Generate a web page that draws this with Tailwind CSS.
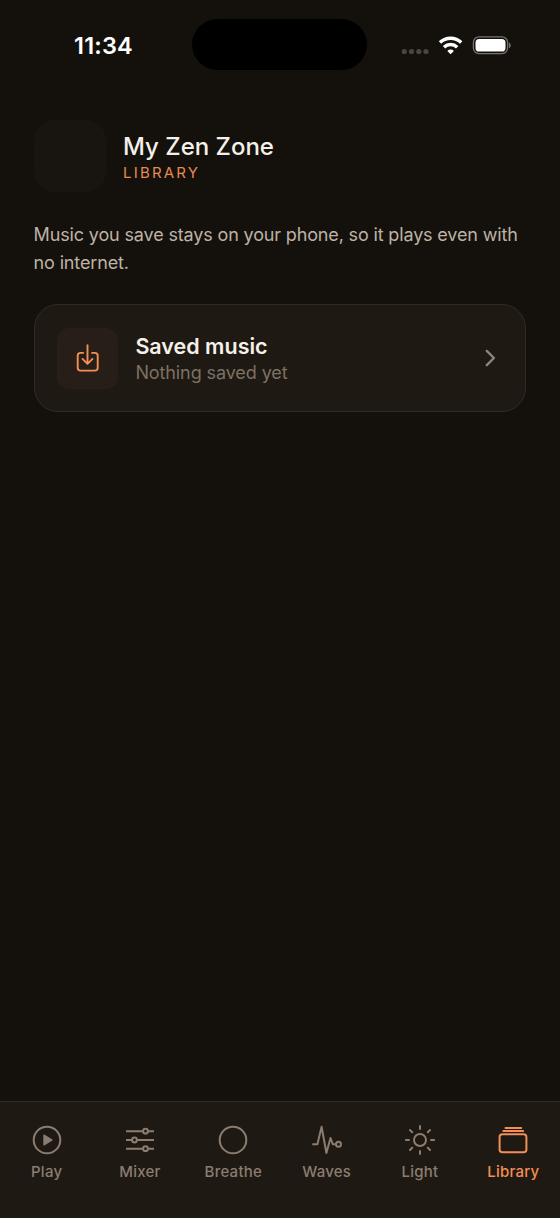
<!DOCTYPE html>
<html lang="en">
<head>
<meta charset="utf-8">
<title>My Zen Zone</title>
<script src="https://cdn.jsdelivr.net/npm/@tailwindcss/browser@4"></script>
</head>
<body class="bg-[#14110c] font-['Inter',sans-serif] antialiased">
<div class="flex h-[1218px] w-[560px] flex-col overflow-hidden">
  <header class="flex h-[90px] items-center pr-[49px] pl-[74px]">
    <div class="w-[118.4px] pt-[2px] text-[23.5px] leading-7 font-semibold tracking-[0.2px] whitespace-nowrap text-white">11:34</div>
    <div class="mb-[1px] h-[51px] w-[175px] rounded-full bg-black"></div>
    <div class="ml-auto flex items-center">
      <svg class="h-[24px] w-[110px]" viewBox="401 33 110 24" fill="none">
        <g fill="#484542"><circle cx="404.3" cy="51.5" r="2.6"/><circle cx="411.5" cy="51.5" r="2.6"/><circle cx="418.8" cy="51.5" r="2.6"/><circle cx="426" cy="51.5" r="2.6"/></g>
        <g stroke="#fff" stroke-width="3.5"><path d="M440 42.6a15.3 15.3 0 0 1 21.2 0"/><path d="M444 47.2a9.6 9.6 0 0 1 13.2 0"/></g>
        <path d="M450.6 54.2l-3.3-3.3a4.7 4.7 0 0 1 6.6 0z" fill="#fff"/>
        <rect x="473.4" y="36.9" width="34.2" height="16.8" rx="5.6" stroke="#75726f" stroke-width="1.3"/>
        <rect x="475.5" y="39" width="30" height="12.6" rx="3.7" fill="#fff"/>
        <path d="M509 42.4c2.2 1 2.2 4.8 0 5.8z" fill="#75726f"/>
      </svg>
    </div>
  </header>
  <main class="flex-1 px-[33.6px] pt-[30px]">
    <div class="flex items-center gap-[17.4px]">
      <div class="size-[72px] rounded-[20px] bg-[#181510]"></div>
      <div class="pt-[4px]">
        <h1 class="text-[24px] leading-[29px] font-medium whitespace-nowrap text-[#f5f0e8]">My Zen Zone</h1>
        <p class="text-[15px] leading-[24px] tracking-[2.2px] text-[#e58a52]">LIBRARY</p>
      </div>
    </div>
    <p class="mt-[29px] text-[18px] leading-7 tracking-[-0.15px] whitespace-nowrap text-[#beb2a5]">Music you save stays on your phone, so it plays even with<br>no internet.</p>
    <section class="mt-[27px] flex h-[108px] items-center rounded-[24px] border border-[#302c23] bg-[#1e1913] pr-[29.6px] pl-[22.4px]">
      <div class="flex size-[61px] items-center justify-center rounded-[12px] bg-[#261e17]">
        <svg class="size-[30px]" viewBox="72.3 343.4 30 30" fill="none" stroke="#f38e55" stroke-width="1.9" stroke-linecap="round" stroke-linejoin="round"><path d="M83.5 353.3H80.8Q78 353.3 78 356.1V368.2Q78 371 80.8 371H95.2Q98 371 98 368.2V356.1Q98 353.3 95.2 353.3H92.3M87.8 345.7V364.2M82.8 359.3L87.8 364.3L92.8 359.3"/></svg>
      </div>
      <div class="ml-[17.4px] flex-1 pt-[1px] whitespace-nowrap">
        <h2 class="text-[21.5px] leading-[27px] font-semibold text-[#f5f0e8]">Saved music</h2>
        <p class="text-[18px] leading-[25px] tracking-[-0.1px] text-[#7d7164]">Nothing saved yet</p>
      </div>
      <svg class="h-[18px] w-[11px]" viewBox="0 0 11 18" fill="none" stroke="#8f8478" stroke-width="2.4" stroke-linecap="round" stroke-linejoin="round"><path d="M1.8 1.9L8.9 9L1.8 16.1"/></svg>
    </section>
  </main>
  <nav class="grid h-[117px] grid-cols-6 border-t border-[#302b24] bg-[#1e1913] text-[15px] leading-5 font-medium tracking-[0.25px] whitespace-nowrap text-[#8b7d70]">
    <div class="flex flex-col items-center pt-[22px]">
      <svg class="size-8" viewBox="0 0 32 32" fill="none" stroke="currentColor" stroke-width="2"><circle cx="16" cy="16" r="13.3"/><path d="M13 11.2L21 16L13 20.8Z" fill="currentColor" stroke-width="1.4" stroke-linejoin="round"/></svg>
      <span class="mt-[6px]">Play</span>
    </div>
    <div class="flex flex-col items-center pt-[22px]">
      <svg class="size-8" viewBox="0 0 32 32" fill="none" stroke="currentColor" stroke-width="2"><path d="M2 7.2H19M24 7.2H30M2 16H8M13 16H30M2 24.7H19M24 24.7H30"/><circle cx="21.5" cy="7.2" r="2.4"/><circle cx="10.5" cy="16" r="2.4"/><circle cx="21.5" cy="24.7" r="2.4"/></svg>
      <span class="mt-[6px]">Mixer</span>
    </div>
    <div class="flex flex-col items-center pt-[22px]">
      <svg class="size-8" viewBox="0 0 32 32" fill="none" stroke="currentColor" stroke-width="2"><circle cx="16" cy="16" r="13.3"/></svg>
      <span class="mt-[6px]">Breathe</span>
    </div>
    <div class="flex flex-col items-center pt-[22px]">
      <svg class="size-8" viewBox="0 0 32 32" fill="none" stroke="currentColor" stroke-width="2" stroke-linejoin="round"><path d="M1.3 20.2H6.4L10.6 2.8L15.4 29L19.5 14L21.8 20.2H24.6"/><circle cx="27.5" cy="20.2" r="2.5"/></svg>
      <span class="mt-[6px]">Waves</span>
    </div>
    <div class="flex flex-col items-center pt-[22px]">
      <svg class="size-8" viewBox="0 0 32 32" fill="none" stroke="currentColor" stroke-width="2" stroke-linecap="round"><circle cx="16" cy="16" r="6"/><path d="M16 1.9V5M16 27V30.1M1.9 16H5M27 16H30.1M6 6L8.2 8.2M23.8 23.8L26 26M6 26L8.2 23.8M23.8 8.2L26 6"/></svg>
      <span class="mt-[6px]">Light</span>
    </div>
    <div class="flex flex-col items-center pt-[22px] text-[#f38e55]">
      <svg class="size-8" viewBox="0 0 32 32" fill="none" stroke="currentColor" stroke-width="2" stroke-linecap="round"><rect x="2.6" y="10.3" width="26.8" height="18" rx="2.8"/><path d="M6.3 7.1H26.2M8.5 3.9H24.2"/></svg>
      <span class="mt-[6px]">Library</span>
    </div>
  </nav>
</div>
</body>
</html>
